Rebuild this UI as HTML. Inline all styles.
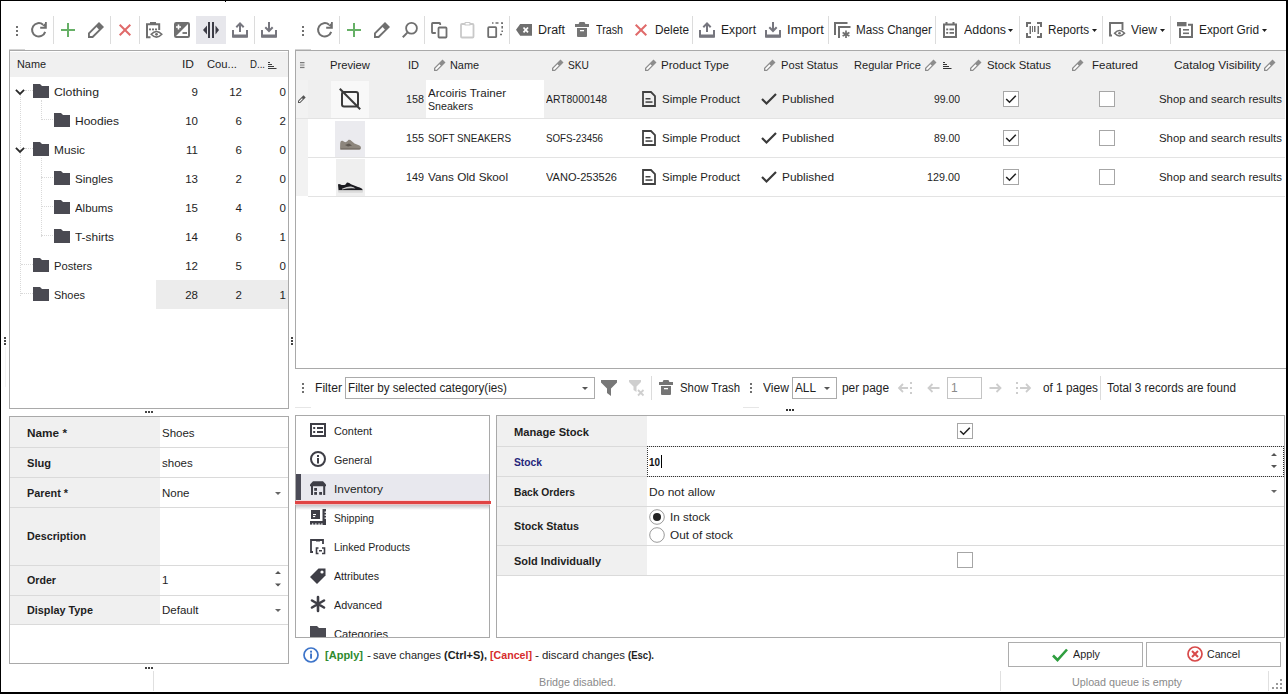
<!DOCTYPE html>
<html><head><meta charset="utf-8"><style>
html,body{margin:0;padding:0;}
body{width:1288px;height:694px;position:relative;overflow:hidden;background:#fff;font-family:"Liberation Sans",sans-serif;}
.t{position:absolute;white-space:nowrap;line-height:14px;font-family:"Liberation Sans",sans-serif;}
.r{position:absolute;box-sizing:border-box;}
svg.r{overflow:visible;}
</style></head><body>
<div class="r" style="left:196px;top:16px;width:30px;height:28px;background:#e7e7ec"></div>
<div class="r" style="left:225px;top:1px;width:1px;height:1px;background:#000"></div>
<div class="r" style="left:16px;top:26px;width:2px;height:2px;background:#707070"></div>
<div class="r" style="left:16px;top:30px;width:2px;height:2px;background:#707070"></div>
<div class="r" style="left:16px;top:34px;width:2px;height:2px;background:#707070"></div>
<svg class="r" style="left:31px;top:22px;" width="16" height="16" viewBox="0 0 16 16"><path d="M12.1 2.67 A6.7 6.7 0 1 0 14.17 9.87" fill="none" stroke="#6f6f6f" stroke-width="2"/><path d="M9.2 5.75 H14.9 V0" fill="none" stroke="#6f6f6f" stroke-width="1.8"/><path d="M11.5 3.5 L14.9 0.5 V5.75 Z" fill="#6f6f6f"/></svg>
<div class="r" style="left:53px;top:16px;width:1px;height:28px;background:#dcdcdc"></div>
<svg class="r" style="left:60px;top:22px;" width="16" height="16" viewBox="0 0 16 16"><path d="M8 1 V15 M1 8 H15" stroke="#66b066" stroke-width="2" fill="none"/></svg>
<svg class="r" style="left:88px;top:22px;" width="16" height="16" viewBox="0 0 16 16"><path d="M0 16 V11 L11 0 L16 5 L5 16 Z" fill="#6f6f6f"/><path d="M1.9 14.1 V11.8 L8.6 5.1 L10.9 7.4 L4.2 14.1 Z" fill="#fff"/></svg>
<div class="r" style="left:110px;top:16px;width:1px;height:28px;background:#dcdcdc"></div>
<svg class="r" style="left:119px;top:24px;" width="12" height="12" viewBox="0 0 12 12"><path d="M0.7 0.7 L11.3 11.3 M11.3 0.7 L0.7 11.3" stroke="#e06a6a" stroke-width="2" fill="none"/></svg>
<div class="r" style="left:139px;top:16px;width:1px;height:28px;background:#dcdcdc"></div>
<svg class="r" style="left:146px;top:22px;" width="16" height="16" viewBox="0 0 16 16"><path d="M4 0 H10 V2 H4 Z" fill="#6f6f6f"/><path d="M4.5 15.2 H1 V2.2 H13.2 V8" fill="none" stroke="#6f6f6f" stroke-width="2"/><rect x="3" y="6.5" width="2" height="1.8" fill="#6f6f6f"/><rect x="6" y="6.5" width="2" height="1.8" fill="#6f6f6f"/><rect x="9" y="6.5" width="2" height="1.8" fill="#6f6f6f"/><path d="M5.2 12.3 Q10.5 6.6 15.8 12.3 Q10.5 18 5.2 12.3 Z" fill="#fff" stroke="#6f6f6f" stroke-width="1.6"/><circle cx="10.5" cy="12.3" r="1.4" fill="#6f6f6f"/></svg>
<svg class="r" style="left:174px;top:22px;" width="16" height="16" viewBox="0 0 16 16"><rect x="1" y="1" width="14" height="14" rx="1.2" fill="#fff" stroke="#6f6f6f" stroke-width="2"/><path d="M1 1 H15 L1 15 Z" fill="#6f6f6f"/><path d="M4.5 2.5 V7.5 M2 5 H7" stroke="#fff" stroke-width="1.6"/><path d="M8.5 11 H13" stroke="#6f6f6f" stroke-width="1.8"/></svg>
<svg class="r" style="left:203px;top:22px;" width="16" height="16" viewBox="0 0 16 16"><rect x="5" y="0" width="2" height="16" fill="#3c3c46"/><rect x="9" y="0" width="2" height="16" fill="#3c3c46"/><path d="M0 8 L4 3.5 V12.5 Z" fill="#3c3c46"/><path d="M16 8 L12.5 3.5 V12.5 Z" fill="#3c3c46"/></svg>
<svg class="r" style="left:232px;top:22px;" width="16" height="16" viewBox="0 0 16 16"><path d="M1 8 V14.2 H15 V8" fill="none" stroke="#76767e" stroke-width="2"/><rect x="0" y="12.5" width="16" height="3.3" rx="1" fill="#76767e"/><path d="M8 1.5 V10" stroke="#76767e" stroke-width="2"/><path d="M4.3 5.2 L8 1.4 L11.7 5.2" fill="none" stroke="#76767e" stroke-width="2"/></svg>
<div class="r" style="left:254px;top:16px;width:1px;height:28px;background:#dcdcdc"></div>
<svg class="r" style="left:261px;top:22px;" width="16" height="16" viewBox="0 0 16 16"><path d="M1 8 V14.2 H15 V8" fill="none" stroke="#76767e" stroke-width="2"/><rect x="0" y="12.5" width="16" height="3.3" rx="1" fill="#76767e"/><path d="M8 0 V9" stroke="#76767e" stroke-width="2"/><path d="M4.3 5.3 L8 9 L11.7 5.3" fill="none" stroke="#76767e" stroke-width="2"/></svg>
<div class="r" style="left:302px;top:26px;width:2px;height:2px;background:#707070"></div>
<div class="r" style="left:302px;top:30px;width:2px;height:2px;background:#707070"></div>
<div class="r" style="left:302px;top:34px;width:2px;height:2px;background:#707070"></div>
<svg class="r" style="left:317px;top:22px;" width="16" height="16" viewBox="0 0 16 16"><path d="M12.1 2.67 A6.7 6.7 0 1 0 14.17 9.87" fill="none" stroke="#6f6f6f" stroke-width="2"/><path d="M9.2 5.75 H14.9 V0" fill="none" stroke="#6f6f6f" stroke-width="1.8"/><path d="M11.5 3.5 L14.9 0.5 V5.75 Z" fill="#6f6f6f"/></svg>
<div class="r" style="left:339px;top:16px;width:1px;height:28px;background:#dcdcdc"></div>
<svg class="r" style="left:346px;top:22px;" width="16" height="16" viewBox="0 0 16 16"><path d="M8 1 V15 M1 8 H15" stroke="#66b066" stroke-width="2" fill="none"/></svg>
<svg class="r" style="left:374px;top:22px;" width="16" height="16" viewBox="0 0 16 16"><path d="M0 16 V11 L11 0 L16 5 L5 16 Z" fill="#6f6f6f"/><path d="M1.9 14.1 V11.8 L8.6 5.1 L10.9 7.4 L4.2 14.1 Z" fill="#fff"/></svg>
<svg class="r" style="left:402px;top:22px;" width="16" height="16" viewBox="0 0 16 16"><circle cx="9.5" cy="6.3" r="5.4" fill="none" stroke="#6f6f6f" stroke-width="1.8"/><path d="M5.6 10.4 L0.8 15.2" stroke="#6f6f6f" stroke-width="2"/></svg>
<div class="r" style="left:424px;top:16px;width:1px;height:28px;background:#dcdcdc"></div>
<svg class="r" style="left:431px;top:22px;" width="16" height="16" viewBox="0 0 16 16"><path d="M4.8 11 H1.7 Q1 11 1 10.3 V1.7 Q1 1 1.7 1 H8.5 Q9.2 1 9.2 1.7 V3" fill="none" stroke="#6f6f6f" stroke-width="1.8"/><rect x="7.5" y="5.5" width="8" height="10" rx="0.8" fill="none" stroke="#6f6f6f" stroke-width="1.8"/></svg>
<svg class="r" style="left:460px;top:22px;" width="16" height="16" viewBox="0 0 16 16"><rect x="1" y="2" width="12.5" height="13.5" rx="1" fill="none" stroke="#c9c9c9" stroke-width="1.8"/><rect x="5" y="0.5" width="5" height="2.5" rx="0.6" fill="#fff" stroke="#c9c9c9" stroke-width="1.2"/></svg>
<svg class="r" style="left:487px;top:22px;" width="16" height="16" viewBox="0 0 16 16"><rect x="1.2" y="5.2" width="8" height="10" rx="0.8" fill="none" stroke="#6f6f6f" stroke-width="1.8"/><path d="M5 1 H6.5 M8.5 1 H11.5 M14 1 H15.2 V2 M15.2 4 V6.5 M15.2 8.5 V10 M13 12.5 H15" stroke="#6f6f6f" stroke-width="1.6" fill="none"/></svg>
<div class="r" style="left:509px;top:16px;width:1px;height:28px;background:#dcdcdc"></div>
<svg class="r" style="left:516px;top:24px;" width="16" height="12" viewBox="0 0 16 12"><path d="M0 5.8 L4.2 0 H16 V11.8 H4.2 Z" fill="#6f6f6f"/><path d="M7.5 3.5 L12 8.3 M12 3.5 L7.5 8.3" stroke="#fff" stroke-width="1.8"/></svg>
<div class="t" style="left:538px;top:23.0px;font-size:12px;color:#1e1e1e;transform:scaleX(1.0378);transform-origin:left top;">Draft</div>
<svg class="r" style="left:575px;top:22px;" width="14" height="15" viewBox="0 0 14 15"><rect x="0" y="2" width="14" height="3" fill="#757575"/><path d="M3.5 2.2 L4.5 0 H9.5 L10.5 2.2 Z" fill="#757575"/><path d="M2 6 H12 V14 Q12 15 11 15 H3 Q2 15 2 14 Z" fill="#757575"/><rect x="5" y="8" width="4" height="1.3" fill="#fff"/></svg>
<div class="t" style="left:596px;top:23.0px;font-size:12px;color:#1e1e1e;transform:scaleX(0.8930);transform-origin:left top;">Trash</div>
<svg class="r" style="left:635px;top:24px;" width="12" height="12" viewBox="0 0 12 12"><path d="M0.7 0.7 L11.3 11.3 M11.3 0.7 L0.7 11.3" stroke="#e06a6a" stroke-width="2" fill="none"/></svg>
<div class="t" style="left:655px;top:23.0px;font-size:12px;color:#1e1e1e;transform:scaleX(0.9802);transform-origin:left top;">Delete</div>
<div class="r" style="left:692px;top:16px;width:1px;height:28px;background:#dcdcdc"></div>
<svg class="r" style="left:699px;top:22px;" width="16" height="16" viewBox="0 0 16 16"><path d="M1 8 V14.2 H15 V8" fill="none" stroke="#76767e" stroke-width="2"/><rect x="0" y="12.5" width="16" height="3.3" rx="1" fill="#76767e"/><path d="M8 1.5 V10" stroke="#76767e" stroke-width="2"/><path d="M4.3 5.2 L8 1.4 L11.7 5.2" fill="none" stroke="#76767e" stroke-width="2"/></svg>
<div class="t" style="left:721px;top:23.0px;font-size:12px;color:#1e1e1e;transform:scaleX(1.0090);transform-origin:left top;">Export</div>
<svg class="r" style="left:765px;top:22px;" width="16" height="16" viewBox="0 0 16 16"><path d="M1 8 V14.2 H15 V8" fill="none" stroke="#76767e" stroke-width="2"/><rect x="0" y="12.5" width="16" height="3.3" rx="1" fill="#76767e"/><path d="M8 0 V9" stroke="#76767e" stroke-width="2"/><path d="M4.3 5.3 L8 9 L11.7 5.3" fill="none" stroke="#76767e" stroke-width="2"/></svg>
<div class="t" style="left:787px;top:23.0px;font-size:12px;color:#1e1e1e;transform:scaleX(1.0877);transform-origin:left top;">Import</div>
<div class="r" style="left:828px;top:16px;width:1px;height:28px;background:#dcdcdc"></div>
<svg class="r" style="left:834px;top:22px;" width="16" height="16" viewBox="0 0 16 16"><path d="M1 13 V1 H13.5" fill="none" stroke="#6f6f6f" stroke-width="2"/><path d="M5 16 V5 H16.5" fill="none" stroke="#6f6f6f" stroke-width="2"/><path d="M12 8.5 V16 M8.6 10.4 L15.4 14.1 M8.6 14.1 L15.4 10.4" stroke="#6f6f6f" stroke-width="1.7"/></svg>
<div class="t" style="left:856px;top:23.0px;font-size:12px;color:#1e1e1e;transform:scaleX(0.9738);transform-origin:left top;">Mass Changer</div>
<div class="r" style="left:935px;top:16px;width:1px;height:28px;background:#dcdcdc"></div>
<svg class="r" style="left:943px;top:22px;" width="14" height="16" viewBox="0 0 14 16"><rect x="1" y="2.5" width="12" height="12.5" fill="none" stroke="#6f6f6f" stroke-width="2"/><path d="M3.5 0 V3 M10.5 0 V3" stroke="#6f6f6f" stroke-width="2"/><rect x="3.2" y="6.5" width="2" height="1.8" fill="#6f6f6f"/><rect x="6.5" y="6.5" width="4.5" height="1.8" fill="#6f6f6f"/><rect x="3.2" y="10" width="2" height="1.8" fill="#6f6f6f"/><rect x="6.5" y="10" width="4.5" height="1.8" fill="#6f6f6f"/></svg>
<div class="t" style="left:964px;top:23.0px;font-size:12px;color:#1e1e1e;transform:scaleX(1.0319);transform-origin:left top;">Addons</div>
<svg class="r" style="left:1008px;top:29px;" width="5" height="3" viewBox="0 0 5 3"><path d="M0 0 H5 L2.5 3 Z" fill="#1e1e1e"/></svg>
<div class="r" style="left:1019px;top:16px;width:1px;height:28px;background:#dcdcdc"></div>
<svg class="r" style="left:1026px;top:22px;" width="16" height="16" viewBox="0 0 16 16"><path d="M5 1 H1 V5 M11 1 H15 V5 M1 11 V15 H5 M15 11 V15 H11" fill="none" stroke="#6f6f6f" stroke-width="2"/><rect x="3.5" y="4" width="1.5" height="8" fill="#6f6f6f"/><rect x="6" y="4" width="1" height="6" fill="#6f6f6f"/><rect x="8" y="4" width="1.5" height="6" fill="#6f6f6f"/><rect x="11.5" y="4" width="1.5" height="8" fill="#6f6f6f"/></svg>
<div class="t" style="left:1048px;top:23.0px;font-size:12px;color:#1e1e1e;transform:scaleX(0.9755);transform-origin:left top;">Reports</div>
<svg class="r" style="left:1092px;top:29px;" width="5" height="3" viewBox="0 0 5 3"><path d="M0 0 H5 L2.5 3 Z" fill="#1e1e1e"/></svg>
<div class="r" style="left:1102px;top:16px;width:1px;height:28px;background:#dcdcdc"></div>
<svg class="r" style="left:1109px;top:22px;" width="16" height="16" viewBox="0 0 16 16"><path d="M3 13.5 H1 V1 H13.5 V8" fill="none" stroke="#6f6f6f" stroke-width="1.9"/><path d="M5.6 11.3 Q10.5 5.8 15.5 11.3 Q10.5 16.6 5.6 11.3 Z" fill="#fff" stroke="#6f6f6f" stroke-width="1.6"/><circle cx="10.5" cy="11.3" r="1.3" fill="#6f6f6f"/></svg>
<div class="t" style="left:1131px;top:23.0px;font-size:12px;color:#1e1e1e;transform:scaleX(1.0079);transform-origin:left top;">View</div>
<svg class="r" style="left:1160px;top:29px;" width="5" height="3" viewBox="0 0 5 3"><path d="M0 0 H5 L2.5 3 Z" fill="#1e1e1e"/></svg>
<div class="r" style="left:1170px;top:16px;width:1px;height:28px;background:#dcdcdc"></div>
<svg class="r" style="left:1177px;top:22px;" width="16" height="16" viewBox="0 0 16 16"><path d="M11 2.8 H15 V15 H3 V6" fill="none" stroke="#6f6f6f" stroke-width="2"/><rect x="0" y="0" width="9.5" height="4.3" fill="#6f6f6f"/><rect x="6" y="7" width="6" height="1.6" fill="#6f6f6f"/><rect x="6" y="10.5" width="6" height="1.6" fill="#6f6f6f"/></svg>
<div class="t" style="left:1199px;top:23.0px;font-size:12px;color:#1e1e1e;transform:scaleX(0.9887);transform-origin:left top;">Export Grid</div>
<svg class="r" style="left:1262px;top:29px;" width="5" height="3" viewBox="0 0 5 3"><path d="M0 0 H5 L2.5 3 Z" fill="#1e1e1e"/></svg>
<div class="r" style="left:9px;top:50px;width:280px;height:359px;border:1px solid #a9a9a9;background:#fff"></div>
<div class="r" style="left:10px;top:52px;width:278px;height:25px;background:#f0f0f0"></div>
<div class="t" style="left:17px;top:57.0px;font-size:11.5px;color:#1e1e1e;transform:scaleX(0.9450);transform-origin:left top;">Name</div>
<div class="t" style="left:182px;top:57.0px;font-size:11.5px;color:#1e1e1e;transform:scaleX(1.0435);transform-origin:left top;">ID</div>
<div class="t" style="left:207px;top:57.0px;font-size:11.5px;color:#1e1e1e;transform:scaleX(0.9776);transform-origin:left top;">Cou...</div>
<div class="t" style="left:250px;top:57.0px;font-size:11.5px;color:#1e1e1e;transform:scaleX(0.8384);transform-origin:left top;">D...</div>
<svg class="r" style="left:268px;top:62px;" width="9" height="8" viewBox="0 0 9 8"><rect x="0" y="0" width="2" height="1" fill="#3a3a3a"/><rect x="0" y="2" width="4" height="1" fill="#3a3a3a"/><rect x="0" y="4" width="6" height="1" fill="#3a3a3a"/><rect x="0" y="6" width="8.5" height="1" fill="#3a3a3a"/></svg>
<div class="r" style="left:156px;top:280px;width:132px;height:29px;background:#ececec"></div>
<div class="r" style="left:20px;top:95px;width:1px;height:201px;border-color:#d9d9d9;border-style:dotted;border-width:0;border-left-width:1px"></div>
<div class="r" style="left:25px;top:90px;width:8px;height:1px;border-color:#d9d9d9;border-style:dotted;border-width:0;border-top-width:1px"></div>
<div class="r" style="left:25px;top:148px;width:8px;height:1px;border-color:#d9d9d9;border-style:dotted;border-width:0;border-top-width:1px"></div>
<div class="r" style="left:21px;top:264px;width:12px;height:1px;border-color:#d9d9d9;border-style:dotted;border-width:0;border-top-width:1px"></div>
<div class="r" style="left:21px;top:293px;width:12px;height:1px;border-color:#d9d9d9;border-style:dotted;border-width:0;border-top-width:1px"></div>
<div class="r" style="left:41px;top:100px;width:1px;height:20px;border-color:#d9d9d9;border-style:dotted;border-width:0;border-left-width:1px"></div>
<div class="r" style="left:41px;top:119px;width:12px;height:1px;border-color:#d9d9d9;border-style:dotted;border-width:0;border-top-width:1px"></div>
<div class="r" style="left:41px;top:158px;width:1px;height:79px;border-color:#d9d9d9;border-style:dotted;border-width:0;border-left-width:1px"></div>
<div class="r" style="left:41px;top:177px;width:12px;height:1px;border-color:#d9d9d9;border-style:dotted;border-width:0;border-top-width:1px"></div>
<div class="r" style="left:41px;top:206px;width:12px;height:1px;border-color:#d9d9d9;border-style:dotted;border-width:0;border-top-width:1px"></div>
<div class="r" style="left:41px;top:235px;width:12px;height:1px;border-color:#d9d9d9;border-style:dotted;border-width:0;border-top-width:1px"></div>
<svg class="r" style="left:33px;top:84px;" width="16" height="14" viewBox="0 0 16 14"><path d="M0 0 H7 L9 2 H16 V14 H0 Z" fill="#4a4a52"/></svg>
<svg class="r" style="left:15px;top:88.5px;" width="10" height="6" viewBox="0 0 10 6"><path d="M0.9 0.9 L5 5 L9.1 0.9" fill="none" stroke="#2a2a2a" stroke-width="1.8"/></svg>
<div class="t" style="left:54px;top:85.0px;font-size:11.5px;color:#1e1e1e;transform:scaleX(1.0663);transform-origin:left top;">Clothing</div>
<div class="t" style="left:-202px;width:400px;text-align:right;top:85.0px;font-size:11.5px;color:#1e1e1e;">9</div>
<div class="t" style="left:-158px;width:400px;text-align:right;top:85.0px;font-size:11.5px;color:#1e1e1e;">12</div>
<div class="t" style="left:-114px;width:400px;text-align:right;top:85.0px;font-size:11.5px;color:#1e1e1e;">0</div>
<svg class="r" style="left:54px;top:113px;" width="16" height="14" viewBox="0 0 16 14"><path d="M0 0 H7 L9 2 H16 V14 H0 Z" fill="#4a4a52"/></svg>
<div class="t" style="left:75px;top:114.0px;font-size:11.5px;color:#1e1e1e;transform:scaleX(1.0426);transform-origin:left top;">Hoodies</div>
<div class="t" style="left:-202px;width:400px;text-align:right;top:114.0px;font-size:11.5px;color:#1e1e1e;">10</div>
<div class="t" style="left:-158px;width:400px;text-align:right;top:114.0px;font-size:11.5px;color:#1e1e1e;">6</div>
<div class="t" style="left:-114px;width:400px;text-align:right;top:114.0px;font-size:11.5px;color:#1e1e1e;">2</div>
<svg class="r" style="left:33px;top:142px;" width="16" height="14" viewBox="0 0 16 14"><path d="M0 0 H7 L9 2 H16 V14 H0 Z" fill="#4a4a52"/></svg>
<svg class="r" style="left:15px;top:146.5px;" width="10" height="6" viewBox="0 0 10 6"><path d="M0.9 0.9 L5 5 L9.1 0.9" fill="none" stroke="#2a2a2a" stroke-width="1.8"/></svg>
<div class="t" style="left:54px;top:143.0px;font-size:11.5px;color:#1e1e1e;transform:scaleX(1.0323);transform-origin:left top;">Music</div>
<div class="t" style="left:-202px;width:400px;text-align:right;top:143.0px;font-size:11.5px;color:#1e1e1e;">11</div>
<div class="t" style="left:-158px;width:400px;text-align:right;top:143.0px;font-size:11.5px;color:#1e1e1e;">6</div>
<div class="t" style="left:-114px;width:400px;text-align:right;top:143.0px;font-size:11.5px;color:#1e1e1e;">0</div>
<svg class="r" style="left:54px;top:171px;" width="16" height="14" viewBox="0 0 16 14"><path d="M0 0 H7 L9 2 H16 V14 H0 Z" fill="#4a4a52"/></svg>
<div class="t" style="left:75px;top:172.0px;font-size:11.5px;color:#1e1e1e;transform:scaleX(1.0075);transform-origin:left top;">Singles</div>
<div class="t" style="left:-202px;width:400px;text-align:right;top:172.0px;font-size:11.5px;color:#1e1e1e;">13</div>
<div class="t" style="left:-158px;width:400px;text-align:right;top:172.0px;font-size:11.5px;color:#1e1e1e;">2</div>
<div class="t" style="left:-114px;width:400px;text-align:right;top:172.0px;font-size:11.5px;color:#1e1e1e;">0</div>
<svg class="r" style="left:54px;top:200px;" width="16" height="14" viewBox="0 0 16 14"><path d="M0 0 H7 L9 2 H16 V14 H0 Z" fill="#4a4a52"/></svg>
<div class="t" style="left:75px;top:201.0px;font-size:11.5px;color:#1e1e1e;transform:scaleX(0.9906);transform-origin:left top;">Albums</div>
<div class="t" style="left:-202px;width:400px;text-align:right;top:201.0px;font-size:11.5px;color:#1e1e1e;">15</div>
<div class="t" style="left:-158px;width:400px;text-align:right;top:201.0px;font-size:11.5px;color:#1e1e1e;">4</div>
<div class="t" style="left:-114px;width:400px;text-align:right;top:201.0px;font-size:11.5px;color:#1e1e1e;">0</div>
<svg class="r" style="left:54px;top:229px;" width="16" height="14" viewBox="0 0 16 14"><path d="M0 0 H7 L9 2 H16 V14 H0 Z" fill="#4a4a52"/></svg>
<div class="t" style="left:75px;top:230.0px;font-size:11.5px;color:#1e1e1e;transform:scaleX(1.0344);transform-origin:left top;">T-shirts</div>
<div class="t" style="left:-202px;width:400px;text-align:right;top:230.0px;font-size:11.5px;color:#1e1e1e;">14</div>
<div class="t" style="left:-158px;width:400px;text-align:right;top:230.0px;font-size:11.5px;color:#1e1e1e;">6</div>
<div class="t" style="left:-114px;width:400px;text-align:right;top:230.0px;font-size:11.5px;color:#1e1e1e;">1</div>
<svg class="r" style="left:33px;top:258px;" width="16" height="14" viewBox="0 0 16 14"><path d="M0 0 H7 L9 2 H16 V14 H0 Z" fill="#4a4a52"/></svg>
<div class="t" style="left:54px;top:259.0px;font-size:11.5px;color:#1e1e1e;transform:scaleX(0.9744);transform-origin:left top;">Posters</div>
<div class="t" style="left:-202px;width:400px;text-align:right;top:259.0px;font-size:11.5px;color:#1e1e1e;">12</div>
<div class="t" style="left:-158px;width:400px;text-align:right;top:259.0px;font-size:11.5px;color:#1e1e1e;">5</div>
<div class="t" style="left:-114px;width:400px;text-align:right;top:259.0px;font-size:11.5px;color:#1e1e1e;">0</div>
<svg class="r" style="left:33px;top:287px;" width="16" height="14" viewBox="0 0 16 14"><path d="M0 0 H7 L9 2 H16 V14 H0 Z" fill="#4a4a52"/></svg>
<div class="t" style="left:54px;top:288.0px;font-size:11.5px;color:#1e1e1e;transform:scaleX(0.9506);transform-origin:left top;">Shoes</div>
<div class="t" style="left:-202px;width:400px;text-align:right;top:288.0px;font-size:11.5px;color:#1e1e1e;">28</div>
<div class="t" style="left:-158px;width:400px;text-align:right;top:288.0px;font-size:11.5px;color:#1e1e1e;">2</div>
<div class="t" style="left:-114px;width:400px;text-align:right;top:288.0px;font-size:11.5px;color:#1e1e1e;">1</div>
<div class="r" style="left:291px;top:337px;width:2px;height:2px;background:#444"></div>
<div class="r" style="left:4px;top:337px;width:2px;height:2px;background:#444"></div>
<div class="r" style="left:291px;top:340px;width:2px;height:2px;background:#444"></div>
<div class="r" style="left:4px;top:340px;width:2px;height:2px;background:#444"></div>
<div class="r" style="left:291px;top:343px;width:2px;height:2px;background:#444"></div>
<div class="r" style="left:4px;top:343px;width:2px;height:2px;background:#444"></div>
<div class="r" style="left:5px;top:347px;width:1px;height:40px;background:#f4f4f4"></div>
<div class="r" style="left:145px;top:411px;width:2px;height:2px;background:#444"></div>
<div class="r" style="left:148px;top:411px;width:2px;height:2px;background:#444"></div>
<div class="r" style="left:151px;top:411px;width:2px;height:2px;background:#444"></div>
<div class="r" style="left:295px;top:50px;width:995px;height:319px;border:1px solid #a9a9a9;background:#fff"></div>
<div class="r" style="left:296px;top:51px;width:989px;height:29px;background:#f0f0f0"></div>
<div class="r" style="left:308px;top:80px;width:977px;height:38px;background:#efefef"></div>
<div class="r" style="left:296px;top:80px;width:12px;height:116px;background:#f2f2f2"></div>
<div class="r" style="left:296px;top:118px;width:989px;height:1px;background:#e3e3e3"></div>
<div class="r" style="left:308px;top:157px;width:977px;height:1px;background:#e3e3e3"></div>
<div class="r" style="left:308px;top:196px;width:977px;height:1px;background:#e3e3e3"></div>
<div class="r" style="left:426px;top:80px;width:118px;height:38px;background:#fff"></div>
<div class="r" style="left:331px;top:81px;width:38px;height:37px;background:#f8f8f8"></div>
<svg class="r" style="left:300px;top:62px;" width="5" height="7" viewBox="0 0 5 7"><rect x="0" y="0" width="4.5" height="1.3" fill="#7a7a7a"/><rect x="0" y="2.4" width="4.5" height="1.3" fill="#9a9a9a"/><rect x="0" y="4.8" width="4.5" height="1.3" fill="#7a7a7a"/></svg>
<div class="t" style="left:330px;top:58.0px;font-size:11.5px;color:#1e1e1e;transform:scaleX(0.9778);transform-origin:left top;">Preview</div>
<div class="t" style="left:408px;top:58.0px;font-size:11.5px;color:#1e1e1e;transform:scaleX(0.9565);transform-origin:left top;">ID</div>
<svg class="r" style="left:434px;top:59px;" width="12" height="12" viewBox="0 0 12 12"><path d="M0 12 V9 L8.5 0.5 L11.5 3.5 L3 12 Z" fill="#8c8c8c"/><path d="M1.3 10.7 V9.4 L5.5 5.2 L6.8 6.5 L2.6 10.7 Z" fill="#fff"/></svg>
<div class="t" style="left:450px;top:58.0px;font-size:11.5px;color:#1e1e1e;transform:scaleX(0.9450);transform-origin:left top;">Name</div>
<svg class="r" style="left:552px;top:59px;" width="12" height="12" viewBox="0 0 12 12"><path d="M0 12 V9 L8.5 0.5 L11.5 3.5 L3 12 Z" fill="#8c8c8c"/><path d="M1.3 10.7 V9.4 L5.5 5.2 L6.8 6.5 L2.6 10.7 Z" fill="#fff"/></svg>
<div class="t" style="left:568px;top:58.0px;font-size:11.5px;color:#1e1e1e;transform:scaleX(0.8877);transform-origin:left top;">SKU</div>
<svg class="r" style="left:645px;top:59px;" width="12" height="12" viewBox="0 0 12 12"><path d="M0 12 V9 L8.5 0.5 L11.5 3.5 L3 12 Z" fill="#8c8c8c"/><path d="M1.3 10.7 V9.4 L5.5 5.2 L6.8 6.5 L2.6 10.7 Z" fill="#fff"/></svg>
<div class="t" style="left:661px;top:58.0px;font-size:11.5px;color:#1e1e1e;transform:scaleX(1.0065);transform-origin:left top;">Product Type</div>
<svg class="r" style="left:764px;top:59px;" width="12" height="12" viewBox="0 0 12 12"><path d="M0 12 V9 L8.5 0.5 L11.5 3.5 L3 12 Z" fill="#8c8c8c"/><path d="M1.3 10.7 V9.4 L5.5 5.2 L6.8 6.5 L2.6 10.7 Z" fill="#fff"/></svg>
<div class="t" style="left:781px;top:58.0px;font-size:11.5px;color:#1e1e1e;transform:scaleX(0.9692);transform-origin:left top;">Post Status</div>
<div class="t" style="left:854px;top:58.0px;font-size:11.5px;color:#1e1e1e;transform:scaleX(0.9617);transform-origin:left top;">Regular Price</div>
<svg class="r" style="left:925px;top:59px;" width="12" height="12" viewBox="0 0 12 12"><path d="M0 12 V9 L8.5 0.5 L11.5 3.5 L3 12 Z" fill="#8c8c8c"/><path d="M1.3 10.7 V9.4 L5.5 5.2 L6.8 6.5 L2.6 10.7 Z" fill="#fff"/></svg>
<svg class="r" style="left:943px;top:62px;" width="9" height="8" viewBox="0 0 9 8"><rect x="0" y="0" width="2" height="1" fill="#333"/><rect x="0" y="2" width="4" height="1" fill="#333"/><rect x="0" y="4" width="6" height="1" fill="#333"/><rect x="0" y="6" width="8.5" height="1" fill="#333"/></svg>
<svg class="r" style="left:970px;top:59px;" width="12" height="12" viewBox="0 0 12 12"><path d="M0 12 V9 L8.5 0.5 L11.5 3.5 L3 12 Z" fill="#8c8c8c"/><path d="M1.3 10.7 V9.4 L5.5 5.2 L6.8 6.5 L2.6 10.7 Z" fill="#fff"/></svg>
<div class="t" style="left:987px;top:58.0px;font-size:11.5px;color:#1e1e1e;transform:scaleX(0.9913);transform-origin:left top;">Stock Status</div>
<svg class="r" style="left:1072px;top:59px;" width="12" height="12" viewBox="0 0 12 12"><path d="M0 12 V9 L8.5 0.5 L11.5 3.5 L3 12 Z" fill="#8c8c8c"/><path d="M1.3 10.7 V9.4 L5.5 5.2 L6.8 6.5 L2.6 10.7 Z" fill="#fff"/></svg>
<div class="t" style="left:1092px;top:58.0px;font-size:11.5px;color:#1e1e1e;transform:scaleX(0.9993);transform-origin:left top;">Featured</div>
<div class="t" style="left:1174px;top:58.0px;font-size:11.5px;color:#1e1e1e;transform:scaleX(1.0336);transform-origin:left top;">Catalog Visibility</div>
<svg class="r" style="left:1264px;top:59px;" width="12" height="12" viewBox="0 0 12 12"><path d="M0 12 V9 L8.5 0.5 L11.5 3.5 L3 12 Z" fill="#8c8c8c"/><path d="M1.3 10.7 V9.4 L5.5 5.2 L6.8 6.5 L2.6 10.7 Z" fill="#fff"/></svg>
<svg class="r" style="left:298px;top:95px;" width="8" height="8" viewBox="0 0 8 8"><path d="M0 8 V5.8 L5.5 0.3 L7.7 2.5 L2.2 8 Z" fill="#555"/><path d="M1 7 V6.2 L4 3.2 L4.8 4 L1.8 7 Z" fill="#fff"/></svg>
<svg class="r" style="left:339px;top:88px;" width="22" height="22" viewBox="0 0 22 22"><rect x="3" y="4" width="16" height="14.5" rx="2" fill="none" stroke="#3a3a3a" stroke-width="2"/><path d="M0.8 0.8 L21.2 21.2" stroke="#3a3a3a" stroke-width="2"/></svg>
<div class="r" style="left:335px;top:121px;width:30px;height:36px;background:#ebebef"></div>
<svg class="r" style="left:339px;top:138px;" width="23" height="13" viewBox="0 0 23 13"><path d="M1 11.6 L1.2 5 Q1.6 2.2 3.5 2.8 L6.2 4.2 Q8 4 9.6 1.8 Q11 1.2 12.5 3 L15.5 5.5 L20.5 7.6 Q22 8.4 22 10 Q22 11.8 20.3 11.8 H2 Z" fill="#8d867d"/><path d="M6 7 L10 5.5 L13 7.5 L9 8.5 Z" fill="#5e5750"/><path d="M2 10.6 H21" stroke="#7a736b" stroke-width="1.2"/></svg>
<div class="r" style="left:336px;top:159px;width:29px;height:37px;background:#efefef"></div>
<svg class="r" style="left:337px;top:181px;" width="27" height="13" viewBox="0 0 27 13"><path d="M1.5 9 L1 3.6 Q1.5 2.4 3 3.2 Q6 4.8 8.5 3.6 L10 1.6 Q12 1.4 14 3.2 L21 6 Q25 7 25.5 8.6 V9.4 H1.5 Z" fill="#1b1b20"/><path d="M5 7.8 Q11 5.2 14 5.6 Q17 6.2 18.5 7.6 Q13 6.8 5 8.4 Z" fill="#cfcfcf"/><rect x="1" y="9.2" width="25" height="2.6" rx="1" fill="#dadada"/></svg>
<div class="t" style="left:24px;width:400px;text-align:right;top:92.0px;font-size:11.5px;color:#1e1e1e;transform:scaleX(0.9381);transform-origin:right top;">158</div>
<div class="t" style="left:546px;top:92.0px;font-size:11.5px;color:#1e1e1e;transform:scaleX(0.9029);transform-origin:left top;">ART8000148</div>
<svg class="r" style="left:642px;top:91px;" width="14" height="16" viewBox="0 0 14 16"><path d="M1 1 H9 L13 5 V15 H1 Z" fill="none" stroke="#404040" stroke-width="1.8"/><rect x="3.5" y="7" width="5" height="1.5" fill="#404040"/><rect x="3.5" y="10.3" width="7" height="1.5" fill="#404040"/></svg>
<div class="t" style="left:662px;top:92.0px;font-size:11.5px;color:#1e1e1e;transform:scaleX(1.0002);transform-origin:left top;">Simple Product</div>
<svg class="r" style="left:761px;top:93px;" width="16" height="12" viewBox="0 0 16 12"><path d="M1 6 L5.5 10.5 L15 1" fill="none" stroke="#3a3a3a" stroke-width="2.2"/></svg>
<div class="t" style="left:782px;top:92.0px;font-size:11.5px;color:#1e1e1e;transform:scaleX(1.0294);transform-origin:left top;">Published</div>
<div class="t" style="left:560px;width:400px;text-align:right;top:92.0px;font-size:11.5px;color:#1e1e1e;transform:scaleX(0.9034);transform-origin:right top;">99.00</div>
<div class="r" style="left:1003px;top:91px;width:16px;height:16px;border:1px solid #a6a6a6;background:#fff"></div>
<svg class="r" style="left:1003px;top:91px;" width="16" height="16" viewBox="0 0 16 16"><path d="M3.2 8 L6.5 11.2 L12.8 4.8" fill="none" stroke="#222" stroke-width="1.6"/></svg>
<div class="r" style="left:1099px;top:91px;width:16px;height:16px;border:1px solid #a6a6a6;background:#fff"></div>
<div class="t" style="left:1159px;top:92.0px;font-size:11.5px;color:#1e1e1e;transform:scaleX(0.9917);transform-origin:left top;">Shop and search results</div>
<div class="t" style="left:24px;width:400px;text-align:right;top:131.0px;font-size:11.5px;color:#1e1e1e;transform:scaleX(0.9381);transform-origin:right top;">155</div>
<div class="t" style="left:428px;top:131.0px;font-size:11.5px;color:#1e1e1e;transform:scaleX(0.8619);transform-origin:left top;">SOFT SNEAKERS</div>
<div class="t" style="left:546px;top:131.0px;font-size:11.5px;color:#1e1e1e;transform:scaleX(0.8492);transform-origin:left top;">SOFS-23456</div>
<svg class="r" style="left:642px;top:130px;" width="14" height="16" viewBox="0 0 14 16"><path d="M1 1 H9 L13 5 V15 H1 Z" fill="none" stroke="#404040" stroke-width="1.8"/><rect x="3.5" y="7" width="5" height="1.5" fill="#404040"/><rect x="3.5" y="10.3" width="7" height="1.5" fill="#404040"/></svg>
<div class="t" style="left:662px;top:131.0px;font-size:11.5px;color:#1e1e1e;transform:scaleX(1.0002);transform-origin:left top;">Simple Product</div>
<svg class="r" style="left:761px;top:132px;" width="16" height="12" viewBox="0 0 16 12"><path d="M1 6 L5.5 10.5 L15 1" fill="none" stroke="#3a3a3a" stroke-width="2.2"/></svg>
<div class="t" style="left:782px;top:131.0px;font-size:11.5px;color:#1e1e1e;transform:scaleX(1.0294);transform-origin:left top;">Published</div>
<div class="t" style="left:560px;width:400px;text-align:right;top:131.0px;font-size:11.5px;color:#1e1e1e;transform:scaleX(0.9034);transform-origin:right top;">89.00</div>
<div class="r" style="left:1003px;top:130px;width:16px;height:16px;border:1px solid #a6a6a6;background:#fff"></div>
<svg class="r" style="left:1003px;top:130px;" width="16" height="16" viewBox="0 0 16 16"><path d="M3.2 8 L6.5 11.2 L12.8 4.8" fill="none" stroke="#222" stroke-width="1.6"/></svg>
<div class="r" style="left:1099px;top:130px;width:16px;height:16px;border:1px solid #a6a6a6;background:#fff"></div>
<div class="t" style="left:1159px;top:131.0px;font-size:11.5px;color:#1e1e1e;transform:scaleX(0.9917);transform-origin:left top;">Shop and search results</div>
<div class="t" style="left:24px;width:400px;text-align:right;top:170.0px;font-size:11.5px;color:#1e1e1e;transform:scaleX(0.9381);transform-origin:right top;">149</div>
<div class="t" style="left:428px;top:170.0px;font-size:11.5px;color:#1e1e1e;transform:scaleX(1.0201);transform-origin:left top;">Vans Old Skool</div>
<div class="t" style="left:546px;top:170.0px;font-size:11.5px;color:#1e1e1e;transform:scaleX(0.9601);transform-origin:left top;">VANO-253526</div>
<svg class="r" style="left:642px;top:169px;" width="14" height="16" viewBox="0 0 14 16"><path d="M1 1 H9 L13 5 V15 H1 Z" fill="none" stroke="#404040" stroke-width="1.8"/><rect x="3.5" y="7" width="5" height="1.5" fill="#404040"/><rect x="3.5" y="10.3" width="7" height="1.5" fill="#404040"/></svg>
<div class="t" style="left:662px;top:170.0px;font-size:11.5px;color:#1e1e1e;transform:scaleX(1.0002);transform-origin:left top;">Simple Product</div>
<svg class="r" style="left:761px;top:171px;" width="16" height="12" viewBox="0 0 16 12"><path d="M1 6 L5.5 10.5 L15 1" fill="none" stroke="#3a3a3a" stroke-width="2.2"/></svg>
<div class="t" style="left:782px;top:170.0px;font-size:11.5px;color:#1e1e1e;transform:scaleX(1.0294);transform-origin:left top;">Published</div>
<div class="t" style="left:560px;width:400px;text-align:right;top:170.0px;font-size:11.5px;color:#1e1e1e;transform:scaleX(0.9378);transform-origin:right top;">129.00</div>
<div class="r" style="left:1003px;top:169px;width:16px;height:16px;border:1px solid #a6a6a6;background:#fff"></div>
<svg class="r" style="left:1003px;top:169px;" width="16" height="16" viewBox="0 0 16 16"><path d="M3.2 8 L6.5 11.2 L12.8 4.8" fill="none" stroke="#222" stroke-width="1.6"/></svg>
<div class="r" style="left:1099px;top:169px;width:16px;height:16px;border:1px solid #a6a6a6;background:#fff"></div>
<div class="t" style="left:1159px;top:170.0px;font-size:11.5px;color:#1e1e1e;transform:scaleX(0.9917);transform-origin:left top;">Shop and search results</div>
<div class="t" style="left:428px;top:86.0px;font-size:11.5px;color:#1e1e1e;transform:scaleX(1.0087);transform-origin:left top;">Arcoiris Trainer</div>
<div class="t" style="left:428px;top:99.0px;font-size:11.5px;color:#1e1e1e;transform:scaleX(0.9260);transform-origin:left top;">Sneakers</div>
<div class="r" style="left:302px;top:383px;width:2px;height:2px;background:#707070"></div>
<div class="r" style="left:302px;top:387px;width:2px;height:2px;background:#707070"></div>
<div class="r" style="left:302px;top:391px;width:2px;height:2px;background:#707070"></div>
<div class="t" style="left:315px;top:381.0px;font-size:12px;color:#1e1e1e;transform:scaleX(1.0123);transform-origin:left top;">Filter</div>
<div class="r" style="left:345px;top:377px;width:250px;height:22px;border:1px solid #ababab;background:#fff"></div>
<div class="t" style="left:348px;top:381.0px;font-size:12px;color:#1e1e1e;transform:scaleX(0.9730);transform-origin:left top;">Filter by selected category(ies)</div>
<svg class="r" style="left:582px;top:387px;" width="6" height="3" viewBox="0 0 6 3"><path d="M0 0 H6 L3.0 3 Z" fill="#555"/></svg>
<svg class="r" style="left:601px;top:380px;" width="16" height="16" viewBox="0 0 16 16"><path d="M0 0 H16 V2.5 L10 8.5 V16 L6 13 V8.5 L0 2.5 Z" fill="#777"/></svg>
<svg class="r" style="left:629px;top:380px;" width="16" height="16" viewBox="0 0 16 16"><path d="M0 0 H12 V2 L7.5 6.5 V12 L4.5 10 V6.5 L0 2 Z" fill="#cfcfcf"/><path d="M9 10 L14.5 15.5 M14.5 10 L9 15.5" stroke="#cfcfcf" stroke-width="1.8"/></svg>
<div class="r" style="left:651px;top:376px;width:1px;height:24px;background:#dcdcdc"></div>
<svg class="r" style="left:659px;top:380px;" width="14" height="15" viewBox="0 0 14 15"><rect x="0" y="2" width="14" height="3" fill="#757575"/><path d="M3.5 2.2 L4.5 0 H9.5 L10.5 2.2 Z" fill="#757575"/><path d="M2 6 H12 V14 Q12 15 11 15 H3 Q2 15 2 14 Z" fill="#757575"/><rect x="5" y="8" width="4" height="1.3" fill="#fff"/></svg>
<div class="t" style="left:680px;top:381.0px;font-size:12px;color:#1e1e1e;transform:scaleX(0.9467);transform-origin:left top;">Show Trash</div>
<div class="r" style="left:750px;top:383px;width:2px;height:2px;background:#707070"></div>
<div class="r" style="left:750px;top:387px;width:2px;height:2px;background:#707070"></div>
<div class="r" style="left:750px;top:391px;width:2px;height:2px;background:#707070"></div>
<div class="t" style="left:763px;top:381.0px;font-size:12px;color:#1e1e1e;transform:scaleX(1.0079);transform-origin:left top;">View</div>
<div class="r" style="left:792px;top:377px;width:45px;height:22px;border:1px solid #ababab;background:#fff"></div>
<div class="t" style="left:795px;top:381.0px;font-size:12px;color:#1e1e1e;transform:scaleX(0.9832);transform-origin:left top;">ALL</div>
<svg class="r" style="left:824px;top:387px;" width="6" height="3" viewBox="0 0 6 3"><path d="M0 0 H6 L3.0 3 Z" fill="#555"/></svg>
<div class="t" style="left:842px;top:381.0px;font-size:12px;color:#1e1e1e;transform:scaleX(0.9921);transform-origin:left top;">per page</div>
<svg class="r" style="left:897px;top:380px;" width="16" height="16" viewBox="0 0 16 16"><path d="M2 8 H11 M6 4 L2 8 L6 12" fill="none" stroke="#cdcdcd" stroke-width="1.8"/><rect x="13" y="2" width="2" height="2" fill="#cdcdcd"/><rect x="13" y="7" width="2" height="2" fill="#cdcdcd"/><rect x="13" y="12" width="2" height="2" fill="#cdcdcd"/></svg>
<svg class="r" style="left:927px;top:380px;" width="14" height="16" viewBox="0 0 14 16"><path d="M1.5 8 H12.5 M5.5 4 L1.5 8 L5.5 12" fill="none" stroke="#cdcdcd" stroke-width="1.8"/></svg>
<div class="r" style="left:947px;top:377px;width:35px;height:22px;border:1px solid #c4c4c4;background:#fff"></div>
<div class="t" style="left:951px;top:381.0px;font-size:12px;color:#8a8a8a;">1</div>
<svg class="r" style="left:989px;top:380px;" width="14" height="16" viewBox="0 0 14 16"><path d="M0.5 8 H11.5 M7.5 4 L11.5 8 L7.5 12" fill="none" stroke="#cdcdcd" stroke-width="1.8"/></svg>
<svg class="r" style="left:1016px;top:380px;" width="16" height="16" viewBox="0 0 16 16"><path d="M4 8 H14 M10 4 L14 8 L10 12" fill="none" stroke="#cdcdcd" stroke-width="1.8"/><rect x="0" y="2" width="2" height="2" fill="#cdcdcd"/><rect x="0" y="7" width="2" height="2" fill="#cdcdcd"/><rect x="0" y="12" width="2" height="2" fill="#cdcdcd"/></svg>
<div class="t" style="left:1043px;top:381.0px;font-size:12px;color:#1e1e1e;transform:scaleX(0.9813);transform-origin:left top;">of 1 pages</div>
<div class="r" style="left:1100px;top:376px;width:1px;height:24px;background:#dcdcdc"></div>
<div class="t" style="left:1107px;top:381.0px;font-size:12px;color:#1e1e1e;transform:scaleX(0.9718);transform-origin:left top;">Total 3 records are found</div>
<div class="r" style="left:786px;top:409px;width:2px;height:2px;background:#333"></div>
<div class="r" style="left:789px;top:409px;width:2px;height:2px;background:#333"></div>
<div class="r" style="left:792px;top:409px;width:2px;height:2px;background:#333"></div>
<div class="r" style="left:295px;top:407px;width:16px;height:1px;background:#e6e6e6"></div>
<div class="r" style="left:743px;top:407px;width:16px;height:1px;background:#e6e6e6"></div>
<div class="r" style="left:9px;top:49px;width:16px;height:1px;background:#d4d4d4"></div>
<div class="r" style="left:295px;top:49px;width:16px;height:1px;background:#d4d4d4"></div>
<div class="r" style="left:9px;top:416px;width:280px;height:248px;border:1px solid #a9a9a9;background:#fff"></div>
<div class="r" style="left:10px;top:417px;width:150px;height:208px;background:#f0f0f0"></div>
<div class="r" style="left:10px;top:447px;width:278px;height:1px;background:#dadada"></div>
<div class="r" style="left:10px;top:477px;width:278px;height:1px;background:#dadada"></div>
<div class="r" style="left:10px;top:507px;width:278px;height:1px;background:#dadada"></div>
<div class="r" style="left:10px;top:565px;width:278px;height:1px;background:#dadada"></div>
<div class="r" style="left:10px;top:595px;width:278px;height:1px;background:#dadada"></div>
<div class="r" style="left:10px;top:624px;width:278px;height:1px;background:#dadada"></div>
<div class="t" style="left:27px;top:426.0px;font-size:11.5px;color:#1e1e1e;font-weight:bold;transform:scaleX(1.0256);transform-origin:left top;">Name *</div>
<div class="t" style="left:162px;top:426.0px;font-size:11.5px;color:#1e1e1e;">Shoes</div>
<div class="t" style="left:27px;top:456.0px;font-size:11.5px;color:#1e1e1e;font-weight:bold;transform:scaleX(0.9630);transform-origin:left top;">Slug</div>
<div class="t" style="left:162px;top:456.0px;font-size:11.5px;color:#1e1e1e;">shoes</div>
<div class="t" style="left:27px;top:486.0px;font-size:11.5px;color:#1e1e1e;font-weight:bold;transform:scaleX(0.9432);transform-origin:left top;">Parent *</div>
<div class="t" style="left:162px;top:486.0px;font-size:11.5px;color:#1e1e1e;">None</div>
<div class="t" style="left:27px;top:529.0px;font-size:11.5px;color:#1e1e1e;font-weight:bold;transform:scaleX(0.9326);transform-origin:left top;">Description</div>
<div class="t" style="left:27px;top:573.0px;font-size:11.5px;color:#1e1e1e;font-weight:bold;transform:scaleX(0.9257);transform-origin:left top;">Order</div>
<div class="t" style="left:162px;top:573.0px;font-size:11.5px;color:#1e1e1e;">1</div>
<div class="t" style="left:27px;top:603.0px;font-size:11.5px;color:#1e1e1e;font-weight:bold;transform:scaleX(0.9416);transform-origin:left top;">Display Type</div>
<div class="t" style="left:162px;top:603.0px;font-size:11.5px;color:#1e1e1e;">Default</div>
<svg class="r" style="left:275px;top:492px;" width="6" height="3" viewBox="0 0 6 3"><path d="M0 0 H6 L3.0 3 Z" fill="#666"/></svg>
<svg class="r" style="left:275px;top:571px;" width="6" height="16" viewBox="0 0 6 16"><path d="M0 3 H6 L3 0 Z M0 12.5 H6 L3 15.5 Z" fill="#555"/></svg>
<svg class="r" style="left:275px;top:609px;" width="6" height="3" viewBox="0 0 6 3"><path d="M0 0 H6 L3.0 3 Z" fill="#666"/></svg>
<div class="r" style="left:145px;top:667px;width:2px;height:2px;background:#444"></div>
<div class="r" style="left:148px;top:667px;width:2px;height:2px;background:#444"></div>
<div class="r" style="left:151px;top:667px;width:2px;height:2px;background:#444"></div>
<div class="r" style="left:295px;top:415px;width:195px;height:223px;border:1px solid #a9a9a9;background:#fff"></div>
<div class="r" style="left:296px;top:474px;width:193px;height:26px;background:#e8e8ee"></div>
<div class="r" style="left:296px;top:474px;width:5px;height:27px;background:#4b4b57"></div>
<div class="r" style="left:296px;top:500px;width:193px;height:1px;background:#f7d9dc"></div>
<div class="r" style="left:295px;top:501px;width:196px;height:3px;background:#e04444"></div>
<div class="r" style="left:295px;top:504px;width:195px;height:1px;background:#e9c4c6"></div>
<div class="r" style="left:296px;top:505px;width:193px;height:5px;background:linear-gradient(#c6c6ca,rgba(255,255,255,0))"></div>
<div style="position:absolute;left:296px;top:416px;width:193px;height:221px;overflow:hidden">
<div class="t" style="left:38px;top:8.0px;font-size:11.5px;color:#1e1e1e;transform:scaleX(0.9434);transform-origin:left top;">Content</div>
<div class="t" style="left:38px;top:37.0px;font-size:11.5px;color:#1e1e1e;transform:scaleX(0.9286);transform-origin:left top;">General</div>
<div class="t" style="left:38px;top:66.0px;font-size:11.5px;color:#1e1e1e;transform:scaleX(1.0357);transform-origin:left top;">Inventory</div>
<div class="t" style="left:38px;top:95.0px;font-size:11.5px;color:#1e1e1e;transform:scaleX(0.8935);transform-origin:left top;">Shipping</div>
<div class="t" style="left:38px;top:124.0px;font-size:11.5px;color:#1e1e1e;transform:scaleX(0.9216);transform-origin:left top;">Linked Products</div>
<div class="t" style="left:38px;top:153.0px;font-size:11.5px;color:#1e1e1e;transform:scaleX(0.9263);transform-origin:left top;">Attributes</div>
<div class="t" style="left:38px;top:182.0px;font-size:11.5px;color:#1e1e1e;transform:scaleX(0.9383);transform-origin:left top;">Advanced</div>
<div class="t" style="left:38px;top:211.0px;font-size:11.5px;color:#1e1e1e;transform:scaleX(0.9708);transform-origin:left top;">Categories</div>
</div>
<svg class="r" style="left:310px;top:423px;" width="16" height="14" viewBox="0 0 16 14"><rect x="1" y="1" width="14" height="12" fill="none" stroke="#3e3e46" stroke-width="2"/><rect x="3.2" y="4" width="2" height="2" fill="#3e3e46"/><rect x="7" y="4" width="6" height="2" fill="#3e3e46"/><rect x="3.2" y="8" width="2" height="2" fill="#3e3e46"/><rect x="7" y="8" width="6" height="2" fill="#3e3e46"/></svg>
<svg class="r" style="left:310px;top:451px;" width="16" height="16" viewBox="0 0 16 16"><circle cx="8" cy="8" r="7" fill="none" stroke="#3e3e46" stroke-width="2"/><rect x="7" y="4" width="2" height="2" fill="#3e3e46"/><rect x="7" y="7" width="2" height="5.5" fill="#3e3e46"/></svg>
<svg class="r" style="left:310px;top:481px;" width="16" height="14" viewBox="0 0 16 14"><path d="M0 3.6 L3 0.2 H13 L16 3.6 V5.2 H0 Z" fill="#3e3e46"/><rect x="1" y="4" width="2" height="10" fill="#3e3e46"/><rect x="13.2" y="4" width="2" height="10" fill="#3e3e46"/><rect x="4.2" y="7" width="2.8" height="2.8" fill="#3e3e46"/><rect x="4.2" y="11" width="2.8" height="2.8" fill="#3e3e46"/><rect x="9.2" y="11" width="2.8" height="2.8" fill="#3e3e46"/></svg>
<svg class="r" style="left:310px;top:509px;" width="16" height="16" viewBox="0 0 16 16"><rect x="1" y="1" width="9" height="9" fill="#3e3e46"/><rect x="3" y="5" width="3" height="1.1" fill="#fff"/><rect x="3" y="7" width="2.2" height="1.1" fill="#fff"/><rect x="12.5" y="0" width="3.5" height="16" fill="#3e3e46"/><rect x="0" y="12" width="16" height="3.6" fill="#3e3e46"/><rect x="14.6" y="2.5" width="1.4" height="1.3" fill="#fff"/><rect x="14.6" y="5.5" width="1.4" height="1.3" fill="#fff"/><rect x="14.6" y="8.5" width="1.4" height="1.3" fill="#fff"/><rect x="2" y="14.4" width="1.3" height="1.3" fill="#fff"/><rect x="5.2" y="14.4" width="1.3" height="1.3" fill="#fff"/><rect x="8.4" y="14.4" width="1.3" height="1.3" fill="#fff"/><rect x="11.3" y="14.4" width="1.2" height="1.3" fill="#fff"/></svg>
<svg class="r" style="left:310px;top:539px;" width="16" height="16" viewBox="0 0 16 16"><path d="M3 13 H1 V1 H13 V5" fill="none" stroke="#3e3e46" stroke-width="1.8"/><rect x="6" y="0" width="4" height="2.5" fill="#3e3e46"/><path d="M8.5 9 H6.5 V14.5 H8.5 M12 9 H14.5 V14.5 H12 M9 11.8 H12" fill="none" stroke="#3e3e46" stroke-width="1.6"/></svg>
<svg class="r" style="left:310px;top:568px;" width="16" height="16" viewBox="0 0 16 16"><path d="M8.5 0.5 H15.5 V7.5 L7 16 L0 9 Z" fill="#3e3e46"/><circle cx="12" cy="4" r="1.6" fill="#fff"/></svg>
<svg class="r" style="left:310px;top:596px;" width="16" height="16" viewBox="0 0 16 16"><path d="M8 1 V15 M2 4.5 L14 11.5 M2 11.5 L14 4.5" stroke="#3e3e46" stroke-width="2.6" stroke-linecap="round"/></svg>
<svg class="r" style="left:310px;top:626px;" width="16" height="11" viewBox="0 0 16 11"><path d="M0 0 H7 L9 2 H16 V11 H0 Z" fill="#4a4a52"/></svg>
<div class="r" style="left:496px;top:415px;width:789px;height:223px;border:1px solid #a9a9a9;background:#fff"></div>
<div class="r" style="left:497px;top:416px;width:150px;height:160px;background:#f0f0f0"></div>
<div class="r" style="left:497px;top:446px;width:787px;height:1px;background:#dadada"></div>
<div class="r" style="left:497px;top:476px;width:787px;height:1px;background:#dadada"></div>
<div class="r" style="left:497px;top:506px;width:787px;height:1px;background:#dadada"></div>
<div class="r" style="left:497px;top:545px;width:787px;height:1px;background:#dadada"></div>
<div class="r" style="left:497px;top:575px;width:787px;height:1px;background:#dadada"></div>
<div class="t" style="left:514px;top:425.0px;font-size:11.5px;color:#1e1e1e;font-weight:bold;transform:scaleX(0.9699);transform-origin:left top;">Manage Stock</div>
<div class="t" style="left:514px;top:455.0px;font-size:11.5px;color:#25257a;font-weight:bold;transform:scaleX(0.8938);transform-origin:left top;">Stock</div>
<div class="t" style="left:514px;top:485.0px;font-size:11.5px;color:#1e1e1e;font-weight:bold;transform:scaleX(0.8917);transform-origin:left top;">Back Orders</div>
<div class="t" style="left:514px;top:519.0px;font-size:11.5px;color:#1e1e1e;font-weight:bold;transform:scaleX(0.9329);transform-origin:left top;">Stock Status</div>
<div class="t" style="left:514px;top:554.0px;font-size:11.5px;color:#1e1e1e;font-weight:bold;transform:scaleX(0.9521);transform-origin:left top;">Sold Individually</div>
<div class="r" style="left:957px;top:423px;width:16px;height:16px;border:1px solid #a6a6a6;background:#fff"></div>
<svg class="r" style="left:957px;top:423px;" width="16" height="16" viewBox="0 0 16 16"><path d="M3.2 8 L6.5 11.2 L12.8 4.8" fill="none" stroke="#222" stroke-width="1.6"/></svg>
<div class="r" style="left:647px;top:446px;width:637px;height:31px;border:1px dotted #333"></div>
<div class="t" style="left:649px;top:455.0px;font-size:11.5px;color:#111;font-weight:bold;transform:scaleX(0.8596);transform-origin:left top;">10</div>
<div class="r" style="left:661px;top:455px;width:1px;height:13px;background:#000"></div>
<svg class="r" style="left:1271px;top:453px;" width="6" height="15" viewBox="0 0 6 15"><path d="M0 3 H6 L3 0 Z M0 12 H6 L3 15 Z" fill="#555"/></svg>
<div class="t" style="left:649px;top:485.0px;font-size:11.5px;color:#1e1e1e;transform:scaleX(1.0427);transform-origin:left top;">Do not allow</div>
<svg class="r" style="left:1271px;top:490px;" width="6" height="3" viewBox="0 0 6 3"><path d="M0 0 H6 L3.0 3 Z" fill="#666"/></svg>
<svg class="r" style="left:649px;top:509px;" width="16" height="16" viewBox="0 0 16 16"><circle cx="8" cy="8" r="7.3" fill="#fff" stroke="#9a9a9a" stroke-width="1"/><circle cx="8" cy="8" r="4" fill="#222"/></svg>
<svg class="r" style="left:649px;top:527px;" width="16" height="16" viewBox="0 0 16 16"><circle cx="8" cy="8" r="7.3" fill="#fff" stroke="#9a9a9a" stroke-width="1"/></svg>
<div class="t" style="left:670px;top:510.0px;font-size:11.5px;color:#1e1e1e;transform:scaleX(1.0091);transform-origin:left top;">In stock</div>
<div class="t" style="left:670px;top:528.0px;font-size:11.5px;color:#1e1e1e;transform:scaleX(1.0267);transform-origin:left top;">Out of stock</div>
<div class="r" style="left:957px;top:552px;width:16px;height:16px;border:1px solid #a6a6a6;background:#fff"></div>
<svg class="r" style="left:303px;top:647px;" width="16" height="16" viewBox="0 0 16 16"><circle cx="8" cy="8" r="7" fill="none" stroke="#3d74c9" stroke-width="1.7"/><rect x="7.1" y="3.7" width="1.9" height="1.9" fill="#3d74c9"/><rect x="7.1" y="6.5" width="1.9" height="5.2" fill="#3d74c9"/></svg>
<div class="t" style="left:325px;top:648.0px;font-size:11.5px;color:#2e8a2e;font-weight:bold;transform:scaleX(0.9594);transform-origin:left top;">[Apply]</div>
<div class="t" style="left:367px;top:648.0px;font-size:11.5px;color:#1e1e1e;transform:scaleX(1.0407);transform-origin:left top;">-</div>
<div class="t" style="left:373px;top:648.0px;font-size:11.5px;color:#1e1e1e;transform:scaleX(0.9582);transform-origin:left top;">save changes</div>
<div class="t" style="left:444px;top:648.0px;font-size:11.5px;color:#1e1e1e;font-weight:bold;transform:scaleX(0.9546);transform-origin:left top;">(Ctrl+S),</div>
<div class="t" style="left:490px;top:648.0px;font-size:11.5px;color:#d62b2b;font-weight:bold;transform:scaleX(0.9256);transform-origin:left top;">[Cancel]</div>
<div class="t" style="left:535px;top:648.0px;font-size:11.5px;color:#1e1e1e;transform:scaleX(1.0407);transform-origin:left top;">-</div>
<div class="t" style="left:542px;top:648.0px;font-size:11.5px;color:#1e1e1e;transform:scaleX(0.9910);transform-origin:left top;">discard changes</div>
<div class="t" style="left:628px;top:648.0px;font-size:11.5px;color:#1e1e1e;font-weight:bold;transform:scaleX(0.8299);transform-origin:left top;">(Esc).</div>
<div class="r" style="left:1008px;top:642px;width:135px;height:25px;border:1px solid #adadad;background:#fff"></div>
<div class="r" style="left:1146px;top:642px;width:135px;height:25px;border:1px solid #adadad;background:#fff"></div>
<svg class="r" style="left:1052px;top:648px;" width="16" height="13" viewBox="0 0 16 13"><path d="M1 7.5 L5.5 12 L15 1.5" fill="none" stroke="#2f9e3f" stroke-width="2.6"/></svg>
<div class="t" style="left:1073px;top:647.0px;font-size:11.5px;color:#1e1e1e;transform:scaleX(0.9381);transform-origin:left top;">Apply</div>
<svg class="r" style="left:1187px;top:646px;" width="16" height="16" viewBox="0 0 16 16"><circle cx="8" cy="8" r="7" fill="none" stroke="#d84a4a" stroke-width="1.7"/><path d="M5 5 L11 11 M11 5 L5 11" stroke="#d84a4a" stroke-width="2"/></svg>
<div class="t" style="left:1207px;top:647.0px;font-size:11.5px;color:#1e1e1e;transform:scaleX(0.9215);transform-origin:left top;">Cancel</div>
<div class="r" style="left:153px;top:671px;width:1px;height:20px;background:#e0e0e0"></div>
<div class="r" style="left:1000px;top:671px;width:1px;height:20px;background:#e0e0e0"></div>
<div class="r" style="left:1268px;top:671px;width:1px;height:20px;background:#e0e0e0"></div>
<div class="t" style="left:539px;top:675.0px;font-size:11.5px;color:#8a8a8a;transform:scaleX(0.9335);transform-origin:left top;">Bridge disabled.</div>
<div class="t" style="left:1072px;top:675.0px;font-size:11.5px;color:#8a8a8a;transform:scaleX(0.9351);transform-origin:left top;">Upload queue is empty</div>
<div class="r" style="left:1280px;top:679px;width:2px;height:2px;background:#9a9a9a"></div>
<div class="r" style="left:1276px;top:683px;width:2px;height:2px;background:#9a9a9a"></div>
<div class="r" style="left:1280px;top:683px;width:2px;height:2px;background:#9a9a9a"></div>
<div class="r" style="left:1272px;top:687px;width:2px;height:2px;background:#9a9a9a"></div>
<div class="r" style="left:1276px;top:687px;width:2px;height:2px;background:#9a9a9a"></div>
<div class="r" style="left:1280px;top:687px;width:2px;height:2px;background:#9a9a9a"></div>
<div class="r" style="left:0px;top:0px;width:1288px;height:1px;background:#000"></div>
<div class="r" style="left:0px;top:0px;width:1px;height:694px;background:#000"></div>
<div class="r" style="left:1286px;top:0px;width:2px;height:694px;background:#000"></div>
<div class="r" style="left:0px;top:692px;width:1288px;height:2px;background:#000"></div>
</body></html>
